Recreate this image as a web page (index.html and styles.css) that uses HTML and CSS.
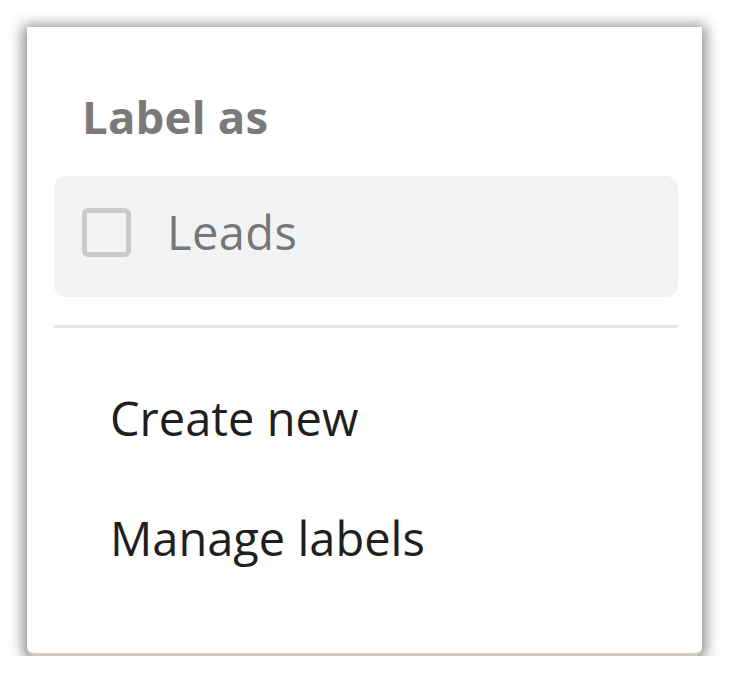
FILE: index.html
```html
<!DOCTYPE html>
<html>
<head>
<meta charset="utf-8">
<link rel="stylesheet" href="styles.css">
</head>
<body>
<div class="menu">
  <div class="menu-title">Label as</div>
  <div class="label-row">
    <span class="checkbox"></span>
    <span class="label-name">Leads</span>
  </div>
  <div class="divider"></div>
  <div class="menu-item">Create new</div>
  <div class="menu-item">Manage labels</div>
</div>
</body>
</html>
```
FILE: styles.css
```css
html, body {
  margin: 0;
  padding: 0;
  background: #ffffff;
}
body {
  font-family: "Open Sans", "Noto Sans", sans-serif;
  padding: 27px 30px 0 27px;
}
.menu {
  width: 675px;
  height: 629px;
  box-sizing: border-box;
  background: #ffffff;
  padding: 59px 24px 0 27px;
  border-bottom: 3px solid #d2ccc3;
  border-radius: 0 0 8px 8px;
  box-shadow: 0 2px 14px 4px rgba(0, 0, 0, 0.45);
}
.menu-title {
  font-size: 45.5px;
  font-weight: 700;
  line-height: 60px;
  color: #7a7a7a;
  padding-left: 28px;
  letter-spacing: 0.2px;
}
.label-row {
  margin-top: 30px;
  height: 121px;
  box-sizing: border-box;
  padding: 26px 0 35px 28px;
  background: #f2f3f5;
  border-radius: 12px;
  display: flex;
  align-items: center;
  gap: 36px;
}
.checkbox {
  width: 49px;
  height: 49px;
  box-sizing: border-box;
  border: 5px solid #cbcbcb;
  border-radius: 6px;
  flex: none;
}
.label-name {
  font-size: 47px;
  line-height: 60px;
  color: #767676;
  letter-spacing: 0.4px;
}
.divider {
  margin: 28px 0 30px;
  height: 3px;
  background: #e6e6e6;
}
.menu-item {
  font-size: 47px;
  line-height: 60px;
  padding: 30px 0 30px 56px;
  color: #1f1f1f;
}
```
